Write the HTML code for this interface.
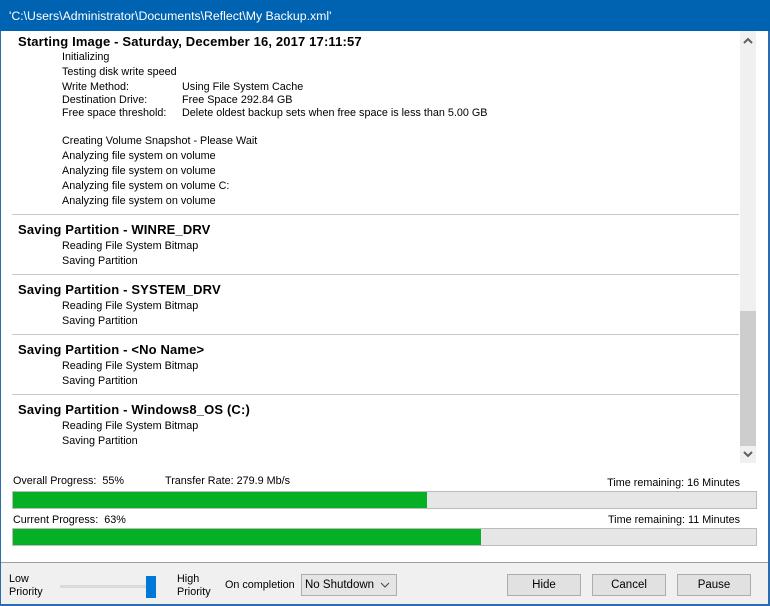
<!DOCTYPE html>
<html><head><style>
*{margin:0;padding:0;box-sizing:border-box}
body{width:770px;height:606px;position:relative;overflow:hidden;font-family:"Liberation Sans",sans-serif;font-size:10.8px;color:#000;background:#fff}
.a{position:absolute;white-space:nowrap}
.h{font-weight:bold;font-size:13px;letter-spacing:0.15px}
.sep{position:absolute;left:12px;width:727px;height:1px;background:#c8c8c8}
.btn{position:absolute;top:574px;width:74px;height:22px;background:#e1e1e1;border:1px solid #adadad;text-align:center;line-height:20px;font-size:11.5px}
</style></head><body>
<div class="a" style="left:0;top:0;width:770px;height:31px;background:#0063b1"></div>
<div class="a" style="left:9px;top:9px;color:#fff;font-size:12.3px">'C:\Users\Administrator\Documents\Reflect\My Backup.xml'</div>
<div class="a" style="left:0;top:31px;width:1px;height:575px;background:#2b6cb0"></div>
<div class="a" style="left:768px;top:31px;width:2px;height:575px;background:#2b6cb0"></div>
<div class="a" style="left:0;top:604px;width:770px;height:2px;background:#2b6cb0"></div>

<div class="a h" style="left:18px;top:34px">Starting Image - Saturday, December 16, 2017 17:11:57</div>
<div class="a" style="left:62px;top:51px">Initializing</div>
<div class="a" style="left:62px;top:66px">Testing disk write speed</div>
<div class="a" style="left:62px;top:81px">Write Method:</div><div class="a" style="left:182px;top:81px">Using File System Cache</div>
<div class="a" style="left:62px;top:94px">Destination Drive:</div><div class="a" style="left:182px;top:94px">Free Space 292.84 GB</div>
<div class="a" style="left:62px;top:107px">Free space threshold:</div><div class="a" style="left:182px;top:107px">Delete oldest backup sets when free space is less than 5.00 GB</div>
<div class="a" style="left:62px;top:135px">Creating Volume Snapshot - Please Wait</div>
<div class="a" style="left:62px;top:150px">Analyzing file system on volume</div>
<div class="a" style="left:62px;top:165px">Analyzing file system on volume</div>
<div class="a" style="left:62px;top:180px">Analyzing file system on volume C:</div>
<div class="a" style="left:62px;top:195px">Analyzing file system on volume</div>
<div class="sep" style="top:214px"></div>
<div class="a h" style="left:18px;top:222px">Saving Partition - WINRE_DRV</div>
<div class="a" style="left:62px;top:240px">Reading File System Bitmap</div>
<div class="a" style="left:62px;top:255px">Saving Partition</div>
<div class="sep" style="top:274px"></div>
<div class="a h" style="left:18px;top:282px">Saving Partition - SYSTEM_DRV</div>
<div class="a" style="left:62px;top:300px">Reading File System Bitmap</div>
<div class="a" style="left:62px;top:315px">Saving Partition</div>
<div class="sep" style="top:334px"></div>
<div class="a h" style="left:18px;top:342px">Saving Partition - &lt;No Name&gt;</div>
<div class="a" style="left:62px;top:360px">Reading File System Bitmap</div>
<div class="a" style="left:62px;top:375px">Saving Partition</div>
<div class="sep" style="top:394px"></div>
<div class="a h" style="left:18px;top:402px">Saving Partition - Windows8_OS (C:)</div>
<div class="a" style="left:62px;top:420px">Reading File System Bitmap</div>
<div class="a" style="left:62px;top:435px">Saving Partition</div>

<div class="a" style="left:740px;top:31px;width:16px;height:432px;background:#f0f0f0"></div>
<div class="a" style="left:740px;top:311px;width:16px;height:135px;background:#cdcdcd"></div>
<svg class="a" style="left:740px;top:35px" width="16" height="12"><path d="M4 8 L8 4 L12 8" stroke="#606060" stroke-width="2" fill="none"/></svg>
<svg class="a" style="left:740px;top:448px" width="16" height="12"><path d="M4 4 L8 8 L12 4" stroke="#606060" stroke-width="2" fill="none"/></svg>

<div class="a" style="left:13px;top:475px">Overall Progress:&nbsp; 55%</div>
<div class="a" style="left:165px;top:475px">Transfer Rate: 279.9 Mb/s</div>
<div class="a" style="right:30px;top:477px">Time remaining: 16 Minutes</div>
<div class="a" style="left:12px;top:491px;width:745px;height:18px;background:#e6e6e6;border:1px solid #bcbcbc"></div>
<div class="a" style="left:13px;top:492px;width:414px;height:16px;background:#06b025"></div>
<div class="a" style="left:13px;top:514px">Current Progress:&nbsp; 63%</div>
<div class="a" style="right:30px;top:514px">Time remaining: 11 Minutes</div>
<div class="a" style="left:12px;top:528px;width:745px;height:18px;background:#e6e6e6;border:1px solid #bcbcbc"></div>
<div class="a" style="left:13px;top:529px;width:468px;height:16px;background:#06b025"></div>

<div class="a" style="left:1px;top:562px;width:767px;height:42px;background:#f0f0f0;border-top:1px solid #a0a0a0"></div>
<div class="a" style="left:9px;top:573px;line-height:13px">Low<br>Priority</div>
<div class="a" style="left:60px;top:585px;width:96px;height:3px;background:#e0e0e0;border:1px solid #d6d6d6"></div>
<div class="a" style="left:146px;top:576px;width:10px;height:22px;background:#0078d7"></div>
<div class="a" style="left:177px;top:573px;line-height:13px">High<br>Priority</div>
<div class="a" style="left:225px;top:579px">On completion</div>
<div class="a" style="left:301px;top:574px;width:96px;height:22px;background:#e5e5e5;border:1px solid #adadad;padding-left:3px;line-height:20px;font-size:11.5px">No Shutdown</div>
<svg class="a" style="left:380px;top:580px" width="10" height="10"><path d="M1 3 L5 7 L9 3" stroke="#444" stroke-width="1" fill="none"/></svg>
<div class="btn" style="left:507px">Hide</div>
<div class="btn" style="left:592px">Cancel</div>
<div class="btn" style="left:677px">Pause</div>
</body></html>
